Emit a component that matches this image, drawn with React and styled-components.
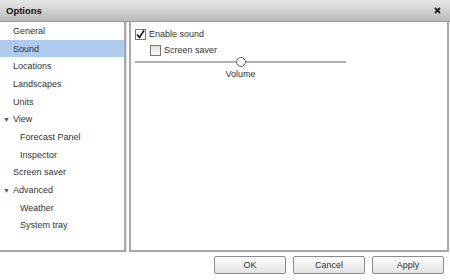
import React, { useState } from 'react'
import styled, { createGlobalStyle } from 'styled-components'

const Global = createGlobalStyle`
  html, body { margin: 0; padding: 0; background: #fff; }
  body { font-family: "Liberation Sans", Arial, sans-serif; font-size: 9px; color: #333; }
`

const tree = [
  { label: 'General', level: 0 },
  { label: 'Sound', level: 0 },
  { label: 'Locations', level: 0 },
  { label: 'Landscapes', level: 0 },
  { label: 'Units', level: 0 },
  { label: 'View', level: 0, open: true },
  { label: 'Forecast Panel', level: 1 },
  { label: 'Inspector', level: 1 },
  { label: 'Screen saver', level: 0 },
  { label: 'Advanced', level: 0, open: true },
  { label: 'Weather', level: 1 },
  { label: 'System tray', level: 1 },
]

const Tick = () => (
  <svg width="9" height="9" viewBox="0 0 9 9">
    <path d="M1 4.5L3.5 7.5L8 0.5" stroke="#111" strokeWidth="1.6" fill="none" />
  </svg>
)

function App() {
  const [selected, setSelected] = useState('Sound')
  const [sound, setSound] = useState(true)
  const [saver, setSaver] = useState(false)
  const volume = 50

  return (
    <Window>
      <Global />
      <TitleBar>
        <Title>Options</Title>
        <Close>
          <svg width="7" height="7" viewBox="0 0 7 7">
            <path d="M1 1L6 6M6 1L1 6" stroke="#222" strokeWidth="1.8" />
          </svg>
        </Close>
      </TitleBar>
      <Body>
        <Tree>
          {tree.map(item => (
            <TreeRow
              key={item.label}
              active={selected === item.label}
              level={item.level}
              onClick={() => setSelected(item.label)}
            >
              {item.open !== undefined && <Arrow>▼</Arrow>}
              {item.label}
            </TreeRow>
          ))}
        </Tree>
        <Page>
          <CheckRow>
            <Box checked={sound} onClick={() => setSound(!sound)}>
              {sound && <Tick />}
            </Box>
            Enable sound
          </CheckRow>
          <CheckRow indent>
            <Box checked={saver} onClick={() => setSaver(!saver)}>
              {saver && <Tick />}
            </Box>
            Screen saver
          </CheckRow>
          <Slider>
            <Track />
            <Thumb style={{ left: `${volume}%` }} />
          </Slider>
          <SliderLabel>Volume</SliderLabel>
        </Page>
      </Body>
      <Buttons>
        <Button>OK</Button>
        <Button>Cancel</Button>
        <Button>Apply</Button>
      </Buttons>
    </Window>
  )
}

export default App

const Window = styled.div`
  width: 450px;
  height: 280px;
  display: flex;
  flex-direction: column;
  background: #fff;
`

const TitleBar = styled.div`
  height: 21px;
  display: flex;
  align-items: center;
  justify-content: space-between;
  padding: 0 6px 0 6px;
  background: linear-gradient(#e6e6e6, #cfcfcf 55%, #b9b9b9);
  border-bottom: 1px solid #9a9a9a;
`

const Title = styled.div`
  font-weight: bold;
  font-size: 9.5px;
  color: #111;
`

const Close = styled.div`
  display: flex;
  align-items: center;
  margin-right: 3px;
`

const Body = styled.div`
  display: flex;
  height: 230px;
`

const Tree = styled.div`
  width: 124px;
  border-right: 2px solid #a8a8a8;
  border-bottom: 2px solid #a8a8a8;
  box-shadow: 1px 0 0 #dcdcdc;
`

const TreeRow = styled.div`
  height: 17.7px;
  display: flex;
  align-items: center;
  padding-left: ${p => (p.level ? 20 : 13)}px;
  background: ${p => (p.active ? '#aecbee' : 'transparent')};
  position: relative;
  cursor: default;
`

const Arrow = styled.span`
  position: absolute;
  left: 3px;
  font-size: 7px;
  color: #555;
`

const Page = styled.div`
  flex: 1;
  margin-left: 3px;
  margin-right: 1px;
  border-left: 2px solid #a8a8a8;
  border-right: 2px solid #a8a8a8;
  border-bottom: 2px solid #a8a8a8;
  padding: 4px 0 0 4px;
`

const CheckRow = styled.div`
  display: flex;
  align-items: center;
  gap: 3px;
  height: 16px;
  margin-left: ${p => (p.indent ? 15 : 0)}px;
`

const Box = styled.div`
  width: 9px;
  height: 9px;
  border: 1px solid #777;
  background: ${p => (p.checked ? '#fff' : 'linear-gradient(#e2e2e2, #fafafa)')};
  display: flex;
  align-items: center;
  justify-content: center;
`

const Slider = styled.div`
  position: relative;
  width: 211px;
  height: 9px;
  margin-top: 0;
`

const Track = styled.div`
  position: absolute;
  left: 0;
  right: 0;
  top: 3px;
  height: 2px;
  background: #b0b0b0;
`

const Thumb = styled.div`
  position: absolute;
  top: -1px;
  width: 8px;
  height: 8px;
  margin-left: -5px;
  border: 1px solid #666;
  border-radius: 50%;
  background: #fafafa;
`

const SliderLabel = styled.div`
  width: 211px;
  text-align: center;
  margin-top: 2px;
`

const Buttons = styled.div`
  display: flex;
  justify-content: flex-end;
  gap: 7px;
  padding: 4px 6px 0 0;
`

const Button = styled.button`
  width: 72px;
  height: 18px;
  font-family: "Liberation Sans", Arial, sans-serif;
  font-size: 9px;
  color: #333;
  border: 1px solid #8a8a8a;
  border-radius: 2px;
  background: linear-gradient(#fdfdfd, #e4e4e4);
  padding: 0;
`
